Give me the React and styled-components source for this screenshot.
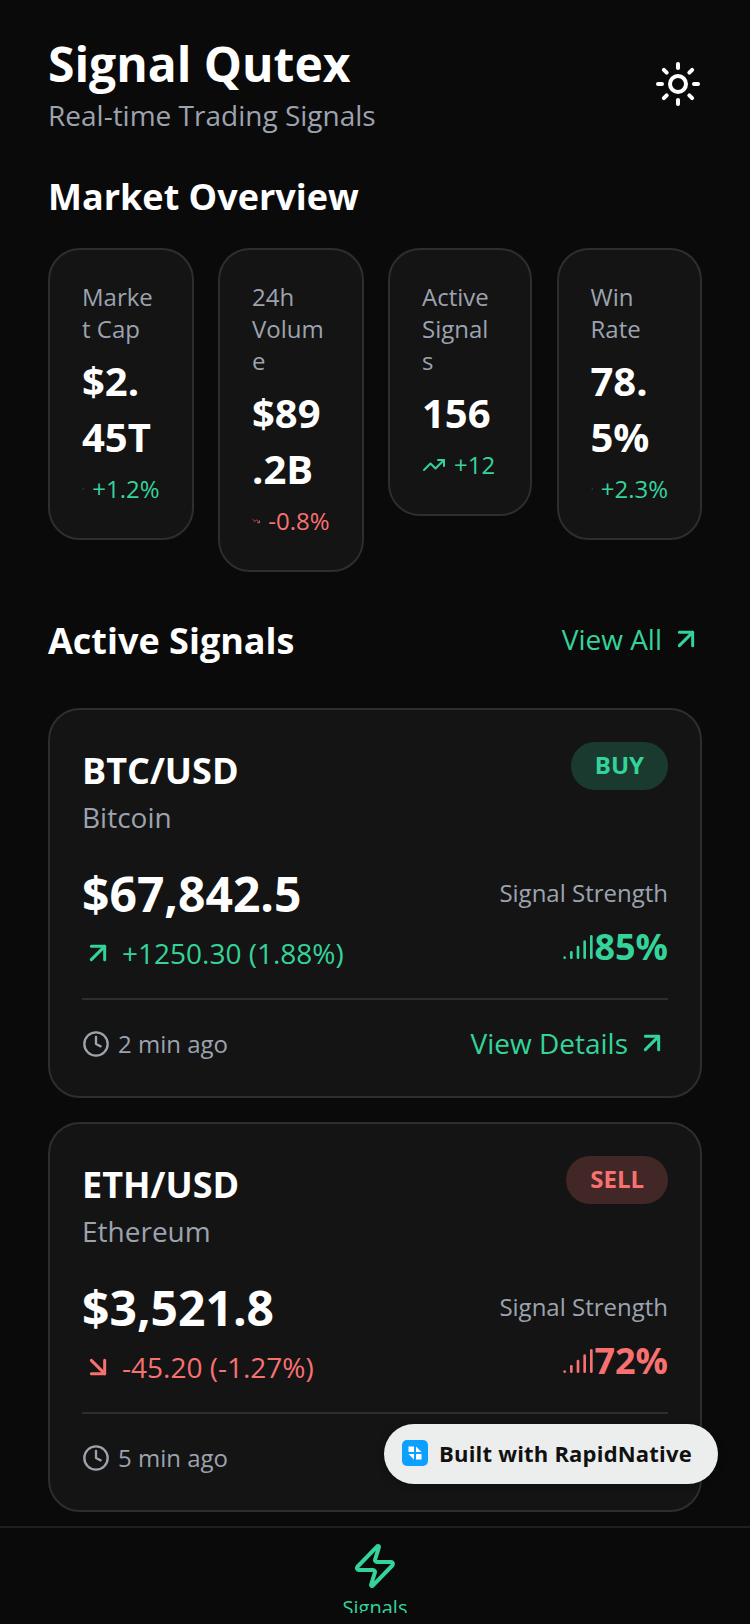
import React from 'react'
import styled, { createGlobalStyle } from 'styled-components'
import { ArrowUpRight, ArrowDownRight, Clock, Signal, Sun, TrendingUp, TrendingDown, Zap } from 'lucide-react'

const GREEN = '#34d399'
const RED = '#f87171'
const MUTED = '#9ca3af'
const toneColor = (p) => (p.$tone === 'down' ? RED : GREEN)

const GlobalStyle = createGlobalStyle`
  html, body { margin: 0; padding: 0; background: #0a0a0a; }
  * { box-sizing: border-box; }
  body { font-family: "Open Sans", "Noto Sans", sans-serif; }
`

const Screen = styled.div`
  position: relative;
  width: 750px;
  height: 1624px;
  overflow: hidden;
  display: flex;
  flex-direction: column;
  background: #0a0a0a;
`
const Content = styled.main`
  flex: 1;
  min-height: 0;
  overflow: hidden;
  padding: 32px 48px 0;
`
const Header = styled.header`
  display: flex;
  justify-content: space-between;
  align-items: center;
  margin-bottom: 32px;
`
const Title = styled.h1`
  margin: 0;
  font-size: 48px;
  line-height: 64px;
  font-weight: 700;
  color: #fff;
`
const Subtitle = styled.div`
  font-size: 28px;
  line-height: 38px;
  padding-bottom: 2px;
  color: ${MUTED};
`
const ThemeButton = styled.div`
  display: flex;
  color: #fff;
`
const SectionTitle = styled.h2`
  margin: 0;
  font-size: 36px;
  line-height: 58px;
  font-weight: 700;
  color: #fff;
`
const StatRow = styled.div`
  display: flex;
  align-items: flex-start;
  gap: 24.5px;
  margin: 22px 0 40px;
`
const StatCard = styled.div`
  flex: 1 1 0;
  min-width: 0;
  padding: 31px 32px 33px;
  background: #141414;
  border: 2px solid #2e2e2e;
  border-radius: 32px;

  &:nth-child(3) {
    flex: 0 0 144px;
  }
`
const StatLabel = styled.div`
  font-size: 24px;
  line-height: 32px;
  color: ${MUTED};
  overflow-wrap: anywhere;
`
const StatValue = styled.div`
  margin-top: 8px;
  font-size: 40px;
  line-height: 56px;
  font-weight: 700;
  color: #fff;
  overflow-wrap: anywhere;
`
const StatChange = styled.div`
  display: flex;
  align-items: center;
  gap: 8px;
  margin-top: 8px;
  font-size: 24px;
  line-height: 32px;
  color: ${toneColor};
  svg { flex: 0 1 auto; min-width: 0; }
  span { flex-shrink: 0; }
`
const ViewLink = styled.div`
  display: flex;
  align-items: center;
  gap: 8px;
  padding-bottom: 3px;
  font-size: 28px;
  line-height: 36px;
  color: ${GREEN};
`
const SectionHead = styled.div`
  display: flex;
  justify-content: space-between;
  align-items: center;
  margin-bottom: 38px;

  ${ViewLink} {
    padding-bottom: 5px;
  }
`
const SignalCard = styled.article`
  padding: 32px;
  margin-bottom: 24px;
  background: #141414;
  border: 2px solid #2e2e2e;
  border-radius: 32px;
`
const CardTop = styled.div`
  display: flex;
  justify-content: space-between;
  align-items: flex-start;
  margin-bottom: 24px;
`
const Symbol = styled.div`
  font-size: 36px;
  line-height: 58px;
  font-weight: 700;
  color: #fff;
`
const CoinName = styled.div`
  font-size: 28px;
  line-height: 34px;
  color: ${MUTED};
`
const Badge = styled.div`
  padding: 7px 24px 9px;
  border-radius: 999px;
  font-size: 24px;
  line-height: 32px;
  font-weight: 700;
  background: ${(p) => (p.$tone === 'down' ? 'rgba(248,113,113,0.2)' : 'rgba(52,211,153,0.2)')};
  color: ${toneColor};
`
const PriceRow = styled.div`
  display: flex;
  justify-content: space-between;
  align-items: flex-end;
  padding-bottom: 24px;
  margin-bottom: 24px;
  border-bottom: 2px solid #2e2e2e;
`
const Price = styled.div`
  font-size: 48px;
  line-height: 72px;
  font-weight: 700;
  color: #fff;
`
const ChangeRow = styled.div`
  display: flex;
  align-items: center;
  gap: 8px;
  margin: 3px 0 1px;
  font-size: 28px;
  line-height: 40px;
  color: ${toneColor};
  svg { stroke-width: 2.25; }
`
const StrengthBox = styled.div`
  display: flex;
  flex-direction: column;
  align-items: flex-end;
  gap: 11px;
`
const StrengthLabel = styled.div`
  font-size: 24px;
  line-height: 32px;
  color: ${MUTED};
`
const StrengthValue = styled.div`
  display: flex;
  align-items: center;
  font-size: 36px;
  line-height: 54px;
  font-weight: 700;
  color: ${toneColor};
`
const CardFoot = styled.div`
  display: flex;
  justify-content: space-between;
  align-items: center;
  min-height: 40px;
`
const TimeAgo = styled.div`
  display: flex;
  align-items: center;
  gap: 8px;
  font-size: 24px;
  line-height: 36px;
  color: ${MUTED};
`
const BottomNav = styled.nav`
  height: 87px;
  margin-bottom: 11px;
  overflow: hidden;
  border-top: 2px solid #1f1f1f;
  display: flex;
  flex-direction: column;
  align-items: center;
  padding-top: 14px;
  color: ${GREEN};
  svg { flex-shrink: 0; }
`
const NavLabel = styled.div`
  font-size: 20px;
  line-height: 28px;
  margin-top: 4px;
`
const BuiltWith = styled.div`
  position: absolute;
  left: 384px;
  top: 1424px;
  width: 334px;
  height: 60px;
  display: flex;
  align-items: center;
  gap: 11px;
  padding: 0 0 2px 18px;
  background: #eceeee;
  border-radius: 30px;
  box-shadow: 0 2px 8px rgba(0, 0, 0, 0.3);
  font-size: 22px;
  letter-spacing: 0.2px;
  font-weight: 700;
  color: #111;
`

const LogoMark = () => (
  <svg width="26" height="26" viewBox="0 0 26 26">
    <rect width="26" height="26" rx="5" fill="#0ea0ff" />
    <path d="M6.5 6.5H12V12H6.5zM14 14h5.5v5.5H14zM14 12h5.5L14 6.5zM12 14H6.5l5.5 5.5z" fill="#fff" />
  </svg>
)

const stats = [
  { label: 'Market Cap', value: '$2.45T', change: '+1.2%', tone: 'up' },
  { label: '24h Volume', value: '$89.2B', change: '-0.8%', tone: 'down' },
  { label: 'Active Signals', value: '156', change: '+12', tone: 'up' },
  { label: 'Win Rate', value: '78.5%', change: '+2.3%', tone: 'up' },
]

const signals = [
  { symbol: 'BTC/USD', name: 'Bitcoin', side: 'BUY', tone: 'up', price: '$67,842.5', change: '+1250.30 (1.88%)', strength: '85%', time: '2 min ago' },
  { symbol: 'ETH/USD', name: 'Ethereum', side: 'SELL', tone: 'down', price: '$3,521.8', change: '-45.20 (-1.27%)', strength: '72%', time: '5 min ago' },
]

export default function App() {
  return (
    <Screen>
      <GlobalStyle />
      <Content>
        <Header>
          <div>
            <Title>Signal Qutex</Title>
            <Subtitle>Real-time Trading Signals</Subtitle>
          </div>
          <ThemeButton><Sun size={48} /></ThemeButton>
        </Header>
        <SectionTitle>Market Overview</SectionTitle>
        <StatRow>
          {stats.map((s) => (
            <StatCard key={s.label}>
              <StatLabel>{s.label}</StatLabel>
              <StatValue>{s.value}</StatValue>
              <StatChange $tone={s.tone}>
                {s.tone === 'down' ? <TrendingDown size={24} /> : <TrendingUp size={24} />}
                <span>{s.change}</span>
              </StatChange>
            </StatCard>
          ))}
        </StatRow>
        <SectionHead>
          <SectionTitle>Active Signals</SectionTitle>
          <ViewLink>View All <ArrowUpRight size={32} strokeWidth={2.25} /></ViewLink>
        </SectionHead>
        {signals.map((s) => (
          <SignalCard key={s.symbol}>
            <CardTop>
              <div>
                <Symbol>{s.symbol}</Symbol>
                <CoinName>{s.name}</CoinName>
              </div>
              <Badge $tone={s.tone}>{s.side}</Badge>
            </CardTop>
            <PriceRow>
              <div>
                <Price>{s.price}</Price>
                <ChangeRow $tone={s.tone}>
                  {s.tone === 'down' ? <ArrowDownRight size={32} /> : <ArrowUpRight size={32} />}
                  {s.change}
                </ChangeRow>
              </div>
              <StrengthBox>
                <StrengthLabel>Signal Strength</StrengthLabel>
                <StrengthValue $tone={s.tone}><Signal size={32} />{s.strength}</StrengthValue>
              </StrengthBox>
            </PriceRow>
            <CardFoot>
              <TimeAgo><Clock size={28} />{s.time}</TimeAgo>
              <ViewLink>View Details <ArrowUpRight size={32} strokeWidth={2.25} /></ViewLink>
            </CardFoot>
          </SignalCard>
        ))}
      </Content>
      <BottomNav>
        <Zap size={48} />
        <NavLabel>Signals</NavLabel>
      </BottomNav>
      <BuiltWith><LogoMark />Built with RapidNative</BuiltWith>
    </Screen>
  )
}
